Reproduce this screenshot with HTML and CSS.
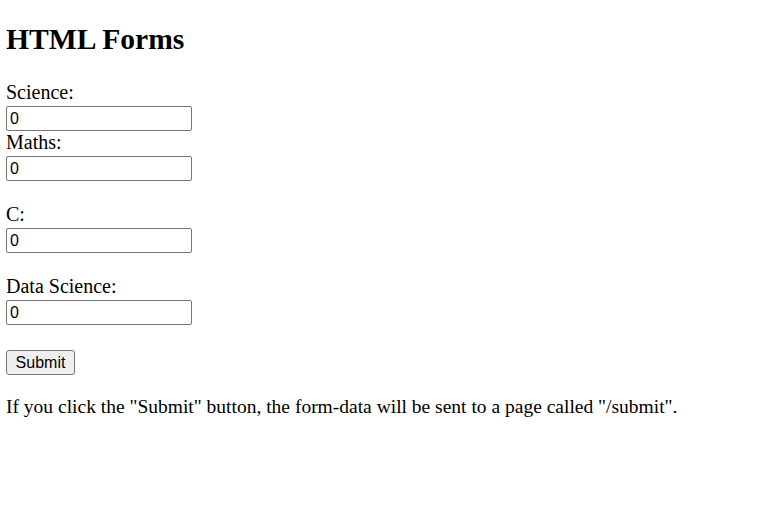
FILE: index.html
```html
<!DOCTYPE html>
<html>
<head>
<meta charset="utf-8">
<link rel="stylesheet" href="styles.css">
</head>
<body class="page">
<h2 class="title">HTML Forms</h2>
<form class="marks-form" action="/submit">
  <label class="label" for="science">Science:</label>
  <input class="field" type="text" id="science" name="science" value="0">
  <label class="label" for="maths">Maths:</label>
  <input class="field" type="text" id="maths" name="maths" value="0">
  <label class="label gap" for="c">C:</label>
  <input class="field" type="text" id="c" name="c" value="0">
  <label class="label gap" for="ds">Data Science:</label>
  <input class="field" type="text" id="ds" name="ds" value="0">
  <input class="submit" type="submit" value="Submit">
</form>
<p class="note">If you click the "Submit" button, the form-data will be sent to a page called "/submit".</p>
</body>
</html>
```
FILE: styles.css
```css
html, body {
  background: #fff;
}
.page {
  margin: 6px;
  font-family: "Liberation Serif", "Times New Roman", serif;
  font-size: 20px;
  line-height: 22px;
  color: #000;
}
.title {
  font-size: 29.6px;
  line-height: 33px;
  font-weight: bold;
  margin: 17px 0 25px;
}
.marks-form {
  display: flex;
  flex-direction: column;
  align-items: flex-start;
  margin: 0;
}
.label {
  display: block;
  height: 22px;
  line-height: 22px;
}
.label.gap {
  margin-top: 22px;
}
.field {
  box-sizing: border-box;
  display: block;
  width: 186px;
  height: 25px;
  margin: 3px 0 0;
  padding: 0 3px;
  border: 1px solid #767676;
  border-radius: 2px;
  font-family: "Liberation Sans", Arial, sans-serif;
  font-size: 16px;
  color: #000;
  background: #fff;
}
.submit {
  box-sizing: border-box;
  display: block;
  width: 69px;
  height: 25px;
  margin: 25px 0 0;
  padding: 0;
  border: 1px solid #767676;
  border-radius: 3px;
  background: #efefef;
  font-family: "Liberation Sans", Arial, sans-serif;
  font-size: 16px;
  color: #000;
}
.note {
  font-size: 19.5px;
  line-height: 22px;
  margin: 21px 0 0;
}
```
